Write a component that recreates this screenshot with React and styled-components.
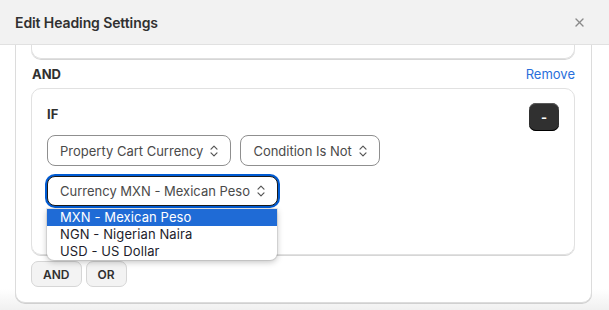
import React from 'react';
import styled, { createGlobalStyle } from 'styled-components';

const GlobalStyle = createGlobalStyle`
    html, body {
        margin: 0;
        padding: 0;
        background: #ffffff;
        font-family: Inter, "Noto Sans", "Liberation Sans", sans-serif;
        color: #303030;
    }
    * {
        box-sizing: border-box;
    }
`;

const Modal = styled.div`
    width: 609px;
    height: 310px;
    display: flex;
    flex-direction: column;
    overflow: hidden;
    background: #f1f1f1;
`;

const Header = styled.div`
    height: 45px;
    flex-shrink: 0;
    display: flex;
    align-items: center;
    justify-content: space-between;
    padding: 0 24px 0 15px;
    background: #f2f2f2;
    border-bottom: 1px solid #e1e1e1;
`;

const Title = styled.h2`
    margin: 0;
    font-size: 14px;
    font-weight: 600;
    color: #303030;
    letter-spacing: -0.1px;
`;

const CloseButton = styled.button`
    border: none;
    background: none;
    padding: 0;
    width: 12px;
    height: 12px;
    display: flex;
    align-items: center;
    justify-content: center;
    cursor: pointer;
`;

const Body = styled.div`
    flex: 1;
    overflow: hidden;
    background: linear-gradient(#ffffff 92%, #f0f0f0);
    padding: 0 17px 0 15px;
`;

// body is scrolled down a little, so the outer card's top is out of view
const Scrolled = styled.div`
    margin-top: -40px;
`;

const OuterCard = styled.div`
    border: 1px solid #dcdcdc;
    border-radius: 10px;
    background: #fff;
    padding: 0 16px 15px 15px;
    box-shadow: 0 1px 0 #d0d0d0;
`;

const PrevCard = styled.div`
    height: 53px;
    border: 1px solid #e0e0e0;
    border-top: none;
    border-radius: 0 0 10px 10px;
    box-shadow: 0 1px 0 #d6d6d6;
`;

const GroupRow = styled.div`
    display: flex;
    justify-content: space-between;
    align-items: center;
    height: 29px;
`;

const GroupLabel = styled.span`
    font-size: 13px;
    font-weight: 700;
    color: #303030;
    margin-left: 1px;
`;

const LinkButton = styled.button`
    border: none;
    background: none;
    padding: 0;
    font-family: inherit;
    font-size: 13px;
    color: #2a6fdb;
    cursor: pointer;
`;

const ConditionCard = styled.div`
    position: relative;
    border: 1px solid #e1e1e1;
    border-radius: 10px;
    padding: 14px 15px 48px;
    box-shadow: 0 1px 0 #d6d6d6;
`;

const CardHead = styled.div`
    display: flex;
    justify-content: space-between;
    align-items: flex-start;
`;

const CardLabel = styled.span`
    font-size: 13px;
    font-weight: 700;
    line-height: 18px;
    margin-top: 2px;
`;

const MinusButton = styled.button`
    width: 30px;
    height: 28px;
    border: none;
    border-radius: 7px;
    background: #303030;
    color: #fff;
    font-family: inherit;
    font-size: 13px;
    font-weight: 700;
    box-shadow: inset 0 -1px 0 #000, inset 0 1px 0 #5a5a5a;
    cursor: pointer;
`;

const SelectRow = styled.div`
    display: flex;
    gap: 9px;
    margin-top: 4px;
`;

const SelectWrap = styled.div`
    position: relative;
    margin-top: ${({ $gap }) => $gap || 0}px;
`;

const SelectBox = styled.div`
    height: ${({ $focused }) => ($focused ? 30 : 31)}px;
    display: inline-flex;
    align-items: center;
    gap: 7px;
    padding: 0 12px 0 12px;
    border: 1px solid ${({ $focused }) => ($focused ? '#1a1a1a' : '#8f8f8f')};
    border-radius: 8px;
    background: #fff;
    font-size: 13px;
    color: #4a4a4a;
    white-space: nowrap;
    box-shadow: ${({ $focused }) => ($focused ? '0 0 0 2px #005bd3' : 'none')};
`;

const OptionList = styled.ul`
    position: absolute;
    top: 33px;
    left: 0;
    width: 230px;
    margin: 0;
    padding: 0;
    list-style: none;
    background: #fff;
    border-radius: 0 0 7px 7px;
    box-shadow: 0 2px 6px rgba(0, 0, 0, 0.25), 0 0 0 1px rgba(0, 0, 0, 0.08);
    overflow: hidden;
    z-index: 2;
`;

const OptionItem = styled.li`
    height: 17px;
    line-height: 17px;
    padding-left: 13px;
    font-size: 13px;
    letter-spacing: 0.1px;
    color: ${({ $active }) => ($active ? '#fff' : '#1d1d2b')};
    background: ${({ $active }) => ($active ? '#1f6bd6' : 'transparent')};
`;

const ButtonGroup = styled.div`
    display: flex;
    gap: 4px;
    margin-top: 6px;
`;

const GhostButton = styled.button`
    height: 26px;
    padding: 0 11px;
    border: 1px solid #d6d6d6;
    border-radius: 7px;
    background: #f3f3f3;
    font-family: inherit;
    font-size: 12px;
    font-weight: 600;
    color: #303030;
    cursor: pointer;
`;

const Chevrons = () => (
    <svg width="8" height="12" viewBox="0 0 8 12" fill="none" stroke="#555" strokeWidth="1.2" strokeLinecap="round" strokeLinejoin="round">
        <polyline points="1,4.2 4,1.2 7,4.2" />
        <polyline points="1,7.8 4,10.8 7,7.8" />
    </svg>
);

const Select = ({ label, focused }) => (
    <SelectBox $focused={focused}>
        {label}
        <Chevrons />
    </SelectBox>
);

const options = ['MXN - Mexican Peso', 'NGN - Nigerian Naira', 'USD - US Dollar'];

const App = () => {
    return (
        <>
            <GlobalStyle />
            <Modal>
                <Header>
                    <Title>Edit Heading Settings</Title>
                    <CloseButton aria-label="Close">
                        <svg width="9" height="9" viewBox="0 0 9 9" stroke="#8a8a8a" strokeWidth="1.4" strokeLinecap="round">
                            <line x1="1" y1="1" x2="8" y2="8" />
                            <line x1="8" y1="1" x2="1" y2="8" />
                        </svg>
                    </CloseButton>
                </Header>
                <Body>
                    <Scrolled>
                        <OuterCard>
                            <PrevCard />
                            <GroupRow>
                                <GroupLabel>AND</GroupLabel>
                                <LinkButton>Remove</LinkButton>
                            </GroupRow>
                            <ConditionCard>
                                <CardHead>
                                    <CardLabel>IF</CardLabel>
                                    <MinusButton>-</MinusButton>
                                </CardHead>
                                <SelectRow>
                                    <Select label="Property Cart Currency" />
                                    <Select label="Condition Is Not" />
                                </SelectRow>
                                <SelectWrap $gap={10}>
                                    <Select label="Currency MXN - Mexican Peso" focused />
                                    <OptionList>
                                        {options.map((opt, index) => (
                                            <OptionItem key={opt} $active={index === 0}>{opt}</OptionItem>
                                        ))}
                                    </OptionList>
                                </SelectWrap>
                            </ConditionCard>
                            <ButtonGroup>
                                <GhostButton>AND</GhostButton>
                                <GhostButton>OR</GhostButton>
                            </ButtonGroup>
                        </OuterCard>
                    </Scrolled>
                </Body>
            </Modal>
        </>
    );
};

export default App;
